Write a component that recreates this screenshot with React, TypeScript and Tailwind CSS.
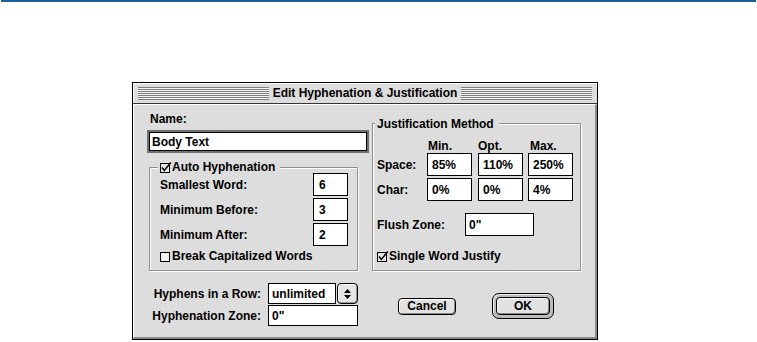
import React from 'react'

const FIELD = 'flex items-center border border-black bg-white pl-[4px]'

function CheckBox({ checked }: { checked?: boolean }) {
  return (
    <svg width="12" height="11" viewBox="0 0 12 11" className="shrink-0">
      <rect x="0.5" y="1.5" width="9" height="9" fill={checked ? '#e2e2e2' : '#f2f2f2'} stroke="#000" />
      {checked && <path d="M2 5.6 L4.3 8.4 L10.8 0.6" fill="none" stroke="#000" strokeWidth="1.5" />}
    </svg>
  )
}

function Group({ title, top, left, className, children }: { title: React.ReactNode; top: string; left: string; className: string; children: React.ReactNode }) {
  return (
    <div className={`relative border border-[#8e8e8e] shadow-[inset_1px_1px_0_#fff,1px_1px_0_#fff] ${className}`}>
      <div className={`absolute flex items-center bg-[#dddddd] pl-[2px] pr-[5px] leading-[14px] ${top} ${left}`}>{title}</div>
      {children}
    </div>
  )
}

export default function App() {
  let hyph = [
    { label: 'Smallest Word:', value: '6' },
    { label: 'Minimum Before:', value: '3' },
    { label: 'Minimum After:', value: '2' },
  ]

  let just = [
    { label: 'Space:', values: ['85%', '110%', '250%'] },
    { label: 'Char:', values: ['0%', '0%', '4%'] },
  ]

  return (
    <div className="h-[342px] w-[757px] bg-white font-['Liberation_Sans',Arial,sans-serif] text-[12px] font-bold leading-[14px] text-black">
      <div className="mx-[1px] h-[2px] bg-[#1a5f9e]" />

      <div className="ml-[132px] mt-[80px] flex h-[258px] w-[466px] flex-col border border-black bg-[#dddddd]">
        {/* title bar */}
        <div className="flex h-[21px] shrink-0 items-center border-b border-[#333] px-[5px] shadow-[inset_1px_1px_0_#fff]">
          <div className="h-[13px] flex-1 bg-[repeating-linear-gradient(to_bottom,#7d7d7d_0px,#7d7d7d_1px,#f4f4f4_1px,#f4f4f4_2px)]" />
          <div className="px-[4px]">Edit Hyphenation &amp; Justification</div>
          <div className="h-[13px] flex-1 bg-[repeating-linear-gradient(to_bottom,#7d7d7d_0px,#7d7d7d_1px,#f4f4f4_1px,#f4f4f4_2px)]" />
        </div>

        {/* body */}
        <div className="flex flex-1 border-b-2 border-l border-r-2 border-t border-b-[#8a8a8a] border-l-white border-r-[#8a8a8a] border-t-white pl-[15px]">
          {/* left column */}
          <div className="flex w-[218px] flex-col pt-[7px]">
            <div className="pl-[1px]">Name:</div>
            <div className={`${FIELD} mt-[6px] h-[19px] w-[218px] !pl-[2px] shadow-[0_0_0_2px_#707070]`}>Body Text</div>

            <Group
              title={<><CheckBox checked /><span>Auto Hyphenation</span></>}
              top="top-[-8px]"
              left="left-[8px]"
              className="mt-[16px] h-[104px] w-[209px] pl-[10px] pr-[9px] pt-[5px]"
            >
              <div className="flex flex-col gap-[2px]">
                {hyph.map((item) => (
                  <div key={item.label} className="flex h-[23px] items-center justify-between">
                    <span>{item.label}</span>
                    <div className={`${FIELD} h-[23px] w-[35px] !pl-[5px]`}>{item.value}</div>
                  </div>
                ))}
              </div>
              <div className="mt-[3px] flex h-[14px] items-center">
                <CheckBox />
                <span>Break Capitalized Words</span>
              </div>
            </Group>

            <div className="mt-[12px] flex h-[21px] items-center">
              <span className="w-[112px] text-right">Hyphens in a Row:</span>
              <div className={`${FIELD} ml-[7px] h-[21px] w-[68px] !pl-[3px]`}>unlimited</div>
              <div className="ml-[1px] flex h-[21px] w-[21px] flex-col items-center justify-center gap-[2px] rounded-[4px] border border-black bg-[#e4e4e4] shadow-[inset_1px_1px_0_#fff,inset_-1px_-1px_0_#999]">
                <svg width="7" height="4" viewBox="0 0 7 4"><path d="M3.5 0 L7 4 L0 4Z" fill="#000" /></svg>
                <svg width="7" height="4" viewBox="0 0 7 4"><path d="M0 0 L7 0 L3.5 4Z" fill="#000" /></svg>
              </div>
            </div>
            <div className="mt-[1px] flex h-[21px] items-center">
              <span className="w-[112px] text-right">Hyphenation Zone:</span>
              <div className={`${FIELD} ml-[7px] h-[21px] w-[90px] !pl-[3px]`}>0"</div>
            </div>
          </div>

          {/* right column */}
          <div className="ml-[5px] flex w-[209px] flex-col">
            <Group
              title={<span>Justification Method</span>}
              top="top-[-7px]"
              left="left-[2px]"
              className="mt-[18px] h-[148px] w-[209px] pl-[4px] pt-[15px]"
            >
              <div className="flex h-[14px]">
                <span className="w-[50px]" />
                <span className="w-[51px] pl-[1px]">Min.</span>
                <span className="w-[50px]">Opt.</span>
                <span className="pl-[2px]">Max.</span>
              </div>
              <div className="flex flex-col gap-[2px]">
                {just.map((row) => (
                  <div key={row.label} className="flex h-[23px] items-center">
                    <span className="w-[50px]">{row.label}</span>
                    <div className={`${FIELD} h-[23px] w-[45px]`}>{row.values[0]}</div>
                    <div className={`${FIELD} ml-[6px] h-[23px] w-[45px]`}>{row.values[1]}</div>
                    <div className={`${FIELD} ml-[5px] h-[23px] w-[45px]`}>{row.values[2]}</div>
                  </div>
                ))}
              </div>
              <div className="mt-[12px] flex h-[23px] items-center">
                <span className="w-[88px]">Flush Zone:</span>
                <div className={`${FIELD} h-[23px] w-[69px] !pl-[3px]`}>0"</div>
              </div>
              <div className="mt-[13px] flex h-[14px] items-center">
                <CheckBox checked />
                <span>Single Word Justify</span>
              </div>
            </Group>

            <div className="mt-[22px] flex items-center">
              <div className="ml-[26px] flex h-[17px] w-[58px] items-center justify-center rounded-[4px] border border-black bg-[#e2e2e2] shadow-[inset_1px_1px_0_#fff,inset_-1px_-1px_0_#8a8a8a]">
                Cancel
              </div>
              <div className="ml-[36px] h-[26px] w-[62px] rounded-[7px] border border-black bg-[#bcbcbc] p-[3px] shadow-[inset_1px_1px_0_#eee]">
                <div className="flex h-full w-full items-center justify-center rounded-[4px] border border-black bg-[#e2e2e2] shadow-[inset_1px_1px_0_#fff,inset_-1px_-1px_0_#8a8a8a]">
                  OK
                </div>
              </div>
            </div>
          </div>
        </div>
      </div>
    </div>
  )
}
